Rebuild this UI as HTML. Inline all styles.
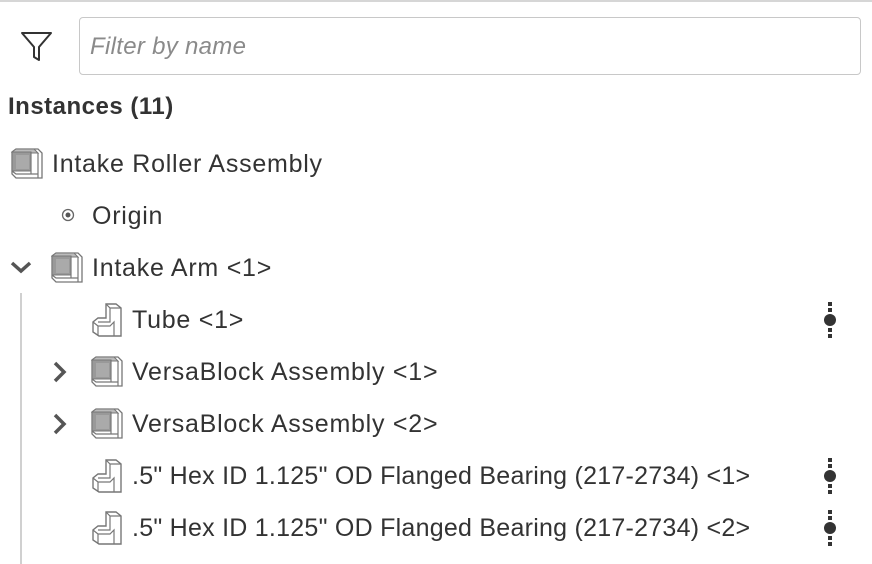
<!DOCTYPE html>
<html><head><meta charset="utf-8"><style>
body{margin:0;width:872px;height:564px;background:#fff;position:relative;overflow:hidden;font-family:"Liberation Sans",sans-serif;color:#333}
.top{position:absolute;left:0;top:0;width:872px;height:2px;background:#d6d6d6}
.inp{position:absolute;left:79px;top:17px;width:780px;height:56px;border:1px solid #c8c8c8;border-radius:4px;box-sizing:content-box}
.inp span{position:absolute;left:10px;top:15px;font-size:24px;font-style:italic;color:#8a8a8a;letter-spacing:0.3px}
.t{position:absolute;font-size:25px;line-height:28px;white-space:nowrap;letter-spacing:0.75px}
.t.l{letter-spacing:0.25px}
.h{position:absolute;left:8px;top:93px;font-size:24px;font-weight:bold;color:#333;letter-spacing:0.5px}
svg{position:absolute}
.vl{position:absolute;left:20px;top:293px;width:2px;height:271px;background:#d0d0d0}
</style></head><body>
<div class="top"></div>
<svg style="left:20px;top:31px" width="34" height="32" viewBox="0 0 34 32"><path d="M2 2 H31 L19 16 V29 L14 26 V16 Z" fill="none" stroke="#333" stroke-width="2" stroke-linejoin="round"/></svg>
<div class="inp"><span>Filter by name</span></div>
<div class="h">Instances (11)</div>

<svg width="0" height="0"><defs>
<g id="asm"><path d="M5 1 H27 L31 5 V30 H5 L1 26 V4 Z" fill="#fff" stroke="#777" stroke-width="1.3"/><path d="M1 4 L5 1 H23 L27 5 H20 Z" fill="#bbb" stroke="#777" stroke-width="1"/><rect x="1" y="4" width="19" height="19" fill="#999" stroke="#777"/><rect x="5" y="7" width="13" height="14" fill="#aaa"/><path d="M20 4 V26 M27 5 V30 M1 23 L5 26 H27" fill="none" stroke="#777" stroke-width="1.2"/></g>
<g id="prt"><path d="M14 1 H24 L29 5 V33 H7 L1 29 V19 L6 15 H14 Z" fill="#fff" stroke="#777" stroke-width="1.4"/><path d="M14 1 L18 5 H29 M18 5 V19 H6 M1 19 L6 23 H18 L22 19 V33 M6 23 V33" fill="none" stroke="#777" stroke-width="1.2"/></g>
</defs></svg>

<svg style="left:11px;top:148px" width="32" height="32"><use href="#asm"/></svg>
<div class="t" style="left:52px;top:150px">Intake Roller Assembly</div>

<svg style="left:60px;top:207px" width="16" height="16"><circle cx="8" cy="8" r="5.5" fill="none" stroke="#666" stroke-width="1.3"/><circle cx="8" cy="8" r="2.5" fill="#555"/></svg>
<div class="t" style="left:92px;top:202px">Origin</div>

<svg style="left:9px;top:259px" width="24" height="16"><path d="M3 4 L12 12 L21 4" fill="none" stroke="#555" stroke-width="3.5"/></svg>
<svg style="left:51px;top:252px" width="32" height="32"><use href="#asm"/></svg>
<div class="t" style="left:92px;top:254px">Intake Arm &lt;1&gt;</div>

<div class="vl"></div>

<svg style="left:92px;top:303px" width="32" height="36"><use href="#prt"/></svg>
<div class="t" style="left:132px;top:306px">Tube &lt;1&gt;</div>

<svg style="left:52px;top:360px" width="16" height="24"><path d="M3 3 L12 12 L3 21" fill="none" stroke="#555" stroke-width="3.5"/></svg>
<svg style="left:91px;top:356px" width="32" height="32"><use href="#asm"/></svg>
<div class="t" style="left:132px;top:358px">VersaBlock Assembly &lt;1&gt;</div>

<svg style="left:52px;top:412px" width="16" height="24"><path d="M3 3 L12 12 L3 21" fill="none" stroke="#555" stroke-width="3.5"/></svg>
<svg style="left:91px;top:408px" width="32" height="32"><use href="#asm"/></svg>
<div class="t" style="left:132px;top:410px">VersaBlock Assembly &lt;2&gt;</div>

<svg style="left:92px;top:459px" width="32" height="36"><use href="#prt"/></svg>
<div class="t l" style="left:132px;top:462px">.5" Hex ID 1.125" OD Flanged Bearing (217-2734) &lt;1&gt;</div>

<svg style="left:92px;top:511px" width="32" height="36"><use href="#prt"/></svg>
<div class="t l" style="left:132px;top:514px">.5" Hex ID 1.125" OD Flanged Bearing (217-2734) &lt;2&gt;</div>

<svg width="0" height="0"><defs><g id="dots"><rect x="4" y="0" width="4" height="4" fill="#333"/><rect x="4" y="6" width="4" height="4" fill="#333"/><circle cx="6" cy="18" r="6" fill="#333"/><rect x="4" y="26" width="4" height="4" fill="#333"/><rect x="4" y="32" width="4" height="4" fill="#333"/></g></defs></svg>
<svg style="left:824px;top:302px" width="12" height="36"><use href="#dots"/></svg>
<svg style="left:824px;top:458px" width="12" height="36"><use href="#dots"/></svg>
<svg style="left:824px;top:510px" width="12" height="36"><use href="#dots"/></svg>
</body></html>
